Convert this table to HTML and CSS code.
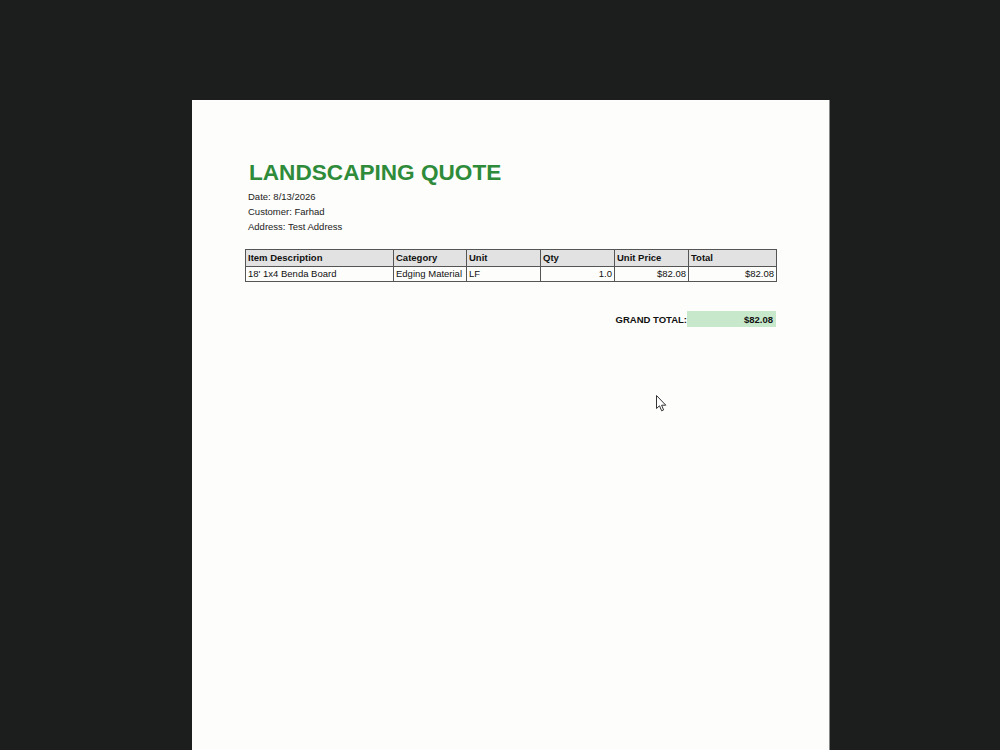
FILE: index.html
```html
<!DOCTYPE html>
<html>
<head>
<meta charset="utf-8">
<link rel="stylesheet" href="styles.css">
</head>
<body>
<div class="page">
  <h1 class="title">LANDSCAPING QUOTE</h1>
  <div class="meta">
    <div>Date: 8/13/2026</div>
    <div>Customer: Farhad</div>
    <div>Address: Test Address</div>
  </div>
  <table class="items">
    <colgroup>
      <col class="c1"><col class="c2"><col class="c3"><col class="c4"><col class="c5"><col class="c6">
    </colgroup>
    <thead>
      <tr><th>Item Description</th><th>Category</th><th>Unit</th><th>Qty</th><th>Unit Price</th><th>Total</th></tr>
    </thead>
    <tbody>
      <tr><td>18' 1x4 Benda Board</td><td>Edging Material</td><td>LF</td><td class="num">1.0</td><td class="num">$82.08</td><td class="num">$82.08</td></tr>
    </tbody>
  </table>
  <div class="grand">
    <span class="grand-label">GRAND TOTAL:</span>
    <span class="grand-value">$82.08</span>
  </div>
</div>
<svg class="cursor" width="12" height="18" viewBox="0 0 12 18">
  <path d="M0.5 0.5 L0.5 13.5 L3.5 10.8 L5.6 15.8 L7.6 14.9 L5.6 10.2 L9.8 10.2 Z" fill="#fff" stroke="#333" stroke-width="1" stroke-linejoin="round"/>
</svg>
</body>
</html>
```
FILE: styles.css
```css
html, body {
  margin: 0;
  padding: 0;
}
body {
  background: #1c1d1d;
  width: 1000px;
  height: 750px;
  overflow: hidden;
  position: relative;
  font-family: "Liberation Sans", Arial, sans-serif;
}
.page {
  position: absolute;
  left: 192px;
  top: 100px;
  width: 637px;
  height: 660px;
  background: #fdfdfb;
  box-sizing: border-box;
  padding: 59px 53px 0 53px;
  box-shadow: 1px 0 0 #888;
}
.title {
  margin: 0 0 0 4px;
  font-size: 22.6px;
  line-height: 28px;
  font-weight: bold;
  color: #2e8b3a;
}
.meta {
  margin: 2px 0 0 3px;
  font-size: 9.5px;
  line-height: 15px;
  color: #222;
}
.items {
  margin-top: 15px;
  border-collapse: collapse;
  width: 531px;
  table-layout: fixed;
  font-size: 9.5px;
  color: #111;
}
.c1 { width: 148px; }
.c2 { width: 73px; }
.c3 { width: 74px; }
.c4 { width: 74px; }
.c5 { width: 74px; }
.c6 { width: 88px; }
.items th, .items td {
  border: 1px solid #555;
  height: 13px;
  padding: 0 2px;
  line-height: 14px;
  white-space: nowrap;
  overflow: hidden;
}
.items th {
  background: #e2e2e2;
  text-align: left;
  font-weight: bold;
  height: 15px;
  line-height: 16px;
}
.items td.num {
  text-align: right;
}
.grand {
  display: flex;
  justify-content: flex-end;
  align-items: center;
  width: 531px;
  margin-top: 29px;
  font-size: 9.5px;
  font-weight: bold;
  color: #111;
}
.grand-label {
  padding-right: 0;
}
.grand-value {
  background: #c8e8cc;
  width: 89px;
  height: 16px;
  line-height: 17px;
  text-align: right;
  box-sizing: border-box;
  padding-right: 3px;
}
.cursor {
  position: absolute;
  left: 656px;
  top: 395px;
}
```
